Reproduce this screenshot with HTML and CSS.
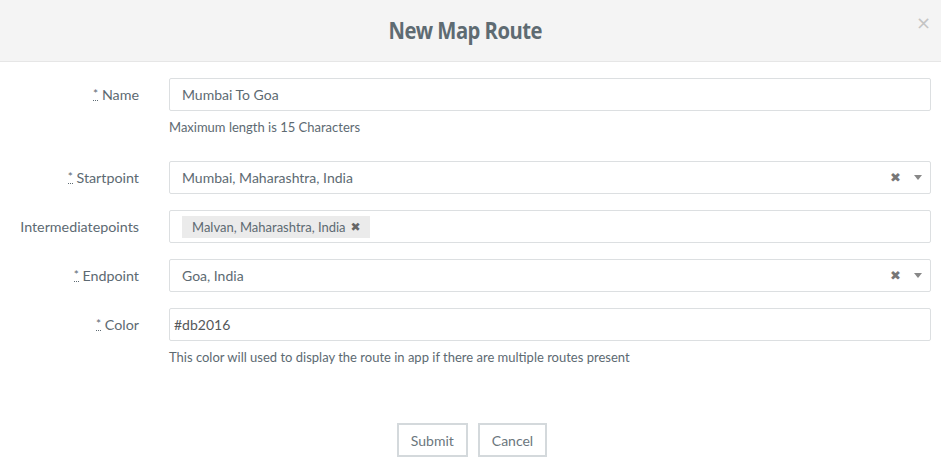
FILE: index.html
```html
<!DOCTYPE html>
<html>
<head>
<meta charset="utf-8">
<link rel="stylesheet" href="styles.css">
</head>
<body>
<div class="modal">
  <div class="header">
    <h1 class="title">New Map Route</h1>
    <span class="close">×</span>
  </div>
  <form class="form">
    <div class="row">
      <label class="label"><abbr class="req">*</abbr> Name</label>
      <div class="field">
        <div class="input">Mumbai To Goa</div>
        <div class="help">Maximum length is 15 Characters</div>
      </div>
    </div>
    <div class="row">
      <label class="label"><abbr class="req">*</abbr> Startpoint</label>
      <div class="field">
        <div class="input select">
          <span class="val">Mumbai, Maharashtra, India</span>
          <span class="clear">✖</span>
          <span class="arrow"></span>
        </div>
      </div>
    </div>
    <div class="row">
      <label class="label">Intermediatepoints</label>
      <div class="field">
        <div class="input multi">
          <span class="tag">Malvan, Maharashtra, India <span class="tag-x">✖</span></span>
        </div>
      </div>
    </div>
    <div class="row">
      <label class="label"><abbr class="req">*</abbr> Endpoint</label>
      <div class="field">
        <div class="input select">
          <span class="val">Goa, India</span>
          <span class="clear">✖</span>
          <span class="arrow"></span>
        </div>
      </div>
    </div>
    <div class="row">
      <label class="label"><abbr class="req">*</abbr> Color</label>
      <div class="field">
        <div class="input color">#db2016</div>
        <div class="help">This color will used to display the route in app if there are multiple routes present</div>
      </div>
    </div>
    <div class="actions">
      <button type="button" class="btn">Submit</button>
      <button type="button" class="btn">Cancel</button>
    </div>
  </form>
</div>
</body>
</html>
```
FILE: styles.css
```css
* { box-sizing: border-box; }
html, body { margin: 0; padding: 0; background: #fff; }
body { font-family: Lato, "Liberation Sans", sans-serif; color: #5d6a72; width: 941px; height: 465px; overflow: hidden; }
.header {
  height: 62px;
  background: #f4f4f4;
  border-bottom: 1px solid #e6e6e6;
  display: flex;
  align-items: center;
  justify-content: center;
  position: relative;
  padding-right: 11px;
}
.title {
  margin: 0;
  font-family: "Open Sans", Lato, sans-serif;
  font-weight: 700;
  font-size: 23px;
  letter-spacing: -0.6px;
  color: #5e6b72;
  transform: scaleX(0.88);
  padding-bottom: 1px;
}
.close {
  position: absolute;
  right: 10px;
  top: 14px;
  font-size: 18px;
  color: #c4c4c4;
  font-family: "DejaVu Sans", sans-serif;
  line-height: 1;
}
.form { padding-top: 16px; }
.row { display: flex; margin-bottom: 16px; }
.label {
  width: 140px;
  flex: none;
  text-align: right;
  font-size: 14.3px;
  line-height: 33px;
  color: #5d6a72;
  padding-right: 1px;
}
.req {
  text-decoration: none;
  border-bottom: 1px dotted #5d6a72;
  font-size: 12px;
  line-height: 1;
  display: inline-block;
  padding-bottom: 0;
  vertical-align: 2px;
}
.field { margin-left: 29px; width: 762px; }
.input {
  height: 33px;
  border: 1px solid #dcdfe1;
  border-radius: 2px;
  padding: 0 12px;
  font-size: 14px;
  line-height: 31px;
  color: #5d6a72;
  display: flex;
  align-items: center;
}
.input.color { padding-left: 4px; color: #55585a; }
.select .val { flex: 1; }
.clear { font-size: 13px; color: #777; margin-right: 13px; font-family: "DejaVu Sans", sans-serif; }
.arrow {
  width: 0; height: 0;
  border-left: 4px solid transparent;
  border-right: 4px solid transparent;
  border-top: 5px solid #888;
  margin-right: -4px;
}
.multi { padding-left: 12px; }
.tag {
  background: #ebebeb;
  height: 22px;
  line-height: 22px;
  padding: 0 0 0 10px;
  font-size: 13px;
  color: #5d6a72;
  display: inline-flex;
  align-items: center;
  width: 188px;
}
.tag-x { font-size: 12px; color: #666; margin-left: 5px; font-family: "DejaVu Sans", sans-serif; }
.help { font-size: 13px; color: #5d6a72; margin-top: 8px; line-height: 16px; margin-bottom: 10px; }
.actions { display: flex; justify-content: center; gap: 10px; padding-top: 32px; padding-left: 3px; }
.btn {
  font-family: Lato, sans-serif;
  font-size: 14px;
  color: #6b767d;
  background: #fff;
  border: 2px solid #d4d9dc;
  height: 34px;
  padding: 0 12px;
  border-radius: 0;
}
```
